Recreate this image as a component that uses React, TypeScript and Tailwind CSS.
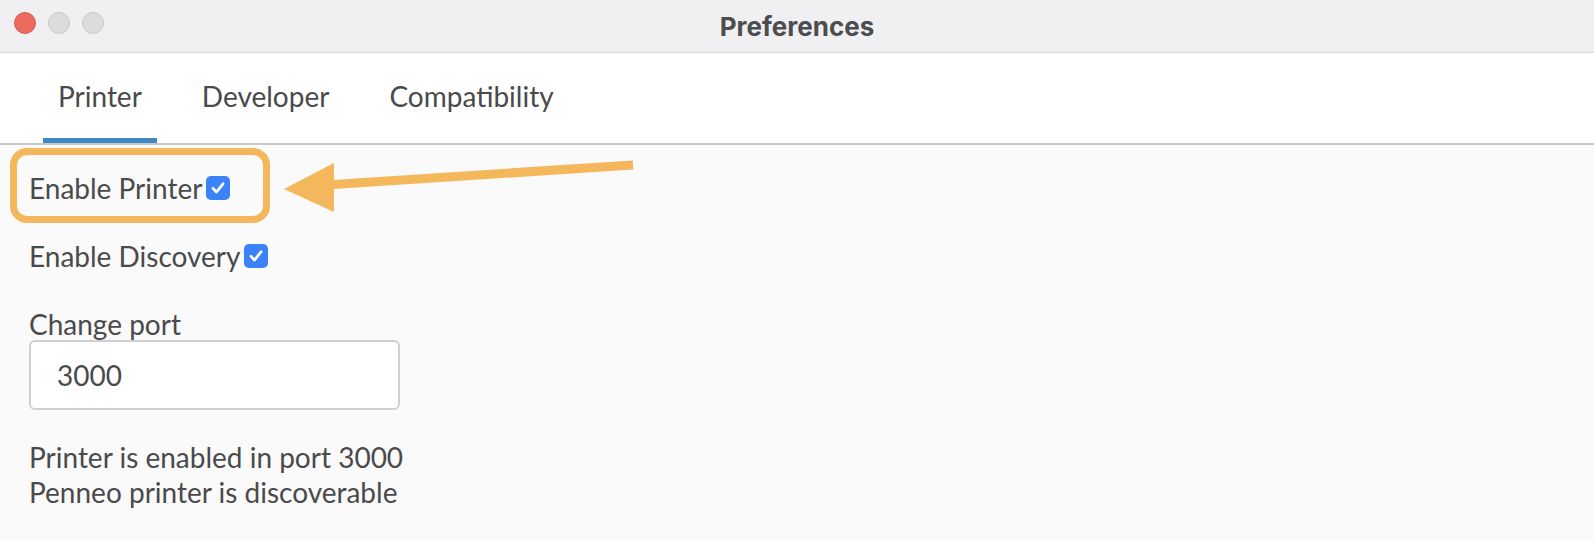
import React from 'react';

const Checkbox: React.FC = () => (
  <span className="ml-[4px] inline-flex h-[24px] w-[24px] items-center justify-center rounded-[5px] bg-[#3a82f7]">
    <svg viewBox="0 0 16 16" className="h-[18px] w-[18px]">
      <path d="M3.5 8.2 L6.6 11.6 L12.6 4.2" fill="none" stroke="#fff" strokeWidth="2.4" strokeLinecap="round" strokeLinejoin="round" />
    </svg>
  </span>
);

const tabs = ['Printer', 'Developer', 'Compatibility'];

export default function App() {
  return (
    <div
      className="relative flex h-[540px] w-[1594px] flex-col overflow-hidden bg-[#fafafa] text-[#4a4a4c]"
      style={{ fontFamily: 'Lato, "Open Sans", sans-serif' }}
    >
      {/* Title bar */}
      <div className="relative flex h-[53px] items-center justify-center border-b border-[#d8d8da] bg-[#f0f0f2]">
        <div className="absolute left-[14px] top-[12px] flex gap-[12px]">
          <span className="h-[22px] w-[22px] rounded-full border border-[#dd5a4f] bg-[#ee6a5e]" />
          <span className="h-[22px] w-[22px] rounded-full border border-[#c9c9cb] bg-[#dcdcde]" />
          <span className="h-[22px] w-[22px] rounded-full border border-[#c9c9cb] bg-[#dcdcde]" />
        </div>
        <span className="text-[26px] font-bold text-[#4d4d4f]" style={{ fontFamily: 'Inter, Lato, sans-serif' }}>
          Preferences
        </span>
      </div>

      {/* Tabs */}
      <div className="flex h-[92px] items-stretch gap-[30px] border-b-2 border-[#c8c8c8] bg-white pl-[43px]">
        {tabs.map((t, i) => (
          <div
            key={t}
            className={`flex items-center px-[15px] pt-[1px] text-[28px] ${
              i === 0 ? 'border-b-[5px] border-[#3f87c4]' : 'border-b-[5px] border-transparent'
            }`}
          >
            {t}
          </div>
        ))}
      </div>

      {/* Content */}
      <div className="flex flex-1 flex-col pl-[29px] pt-[26px] text-[28px]">
        <div className="flex h-[34px] items-center">
          Enable Printer
          <Checkbox />
        </div>
        <div className="mt-[34px] flex h-[34px] items-center">
          Enable Discovery
          <Checkbox />
        </div>
        <div className="mt-[35px] flex h-[32px] items-center">Change port</div>
        <div className="flex h-[70px] w-[371px] items-center rounded-[6px] border-2 border-[#d0d0d0] bg-white pl-[26px] text-[28px]">
          3000
        </div>
        <div className="mt-[30px] leading-[35px]">
          <div>Printer is enabled in port 3000</div>
          <div>Penneo printer is discoverable</div>
        </div>
      </div>

      {/* Annotation highlight */}
      <div className="absolute left-[10px] top-[148px] h-[75px] w-[260px] rounded-[17px] border-[7px] border-[#f4b75b]" />
      <svg className="absolute left-0 top-0" width="1594" height="540">
        <line x1="325" y1="185" x2="633" y2="165" stroke="#f4b75b" strokeWidth="9" />
        <polygon points="284,189 334,163 334,212" fill="#f4b75b" />
      </svg>
    </div>
  );
}
